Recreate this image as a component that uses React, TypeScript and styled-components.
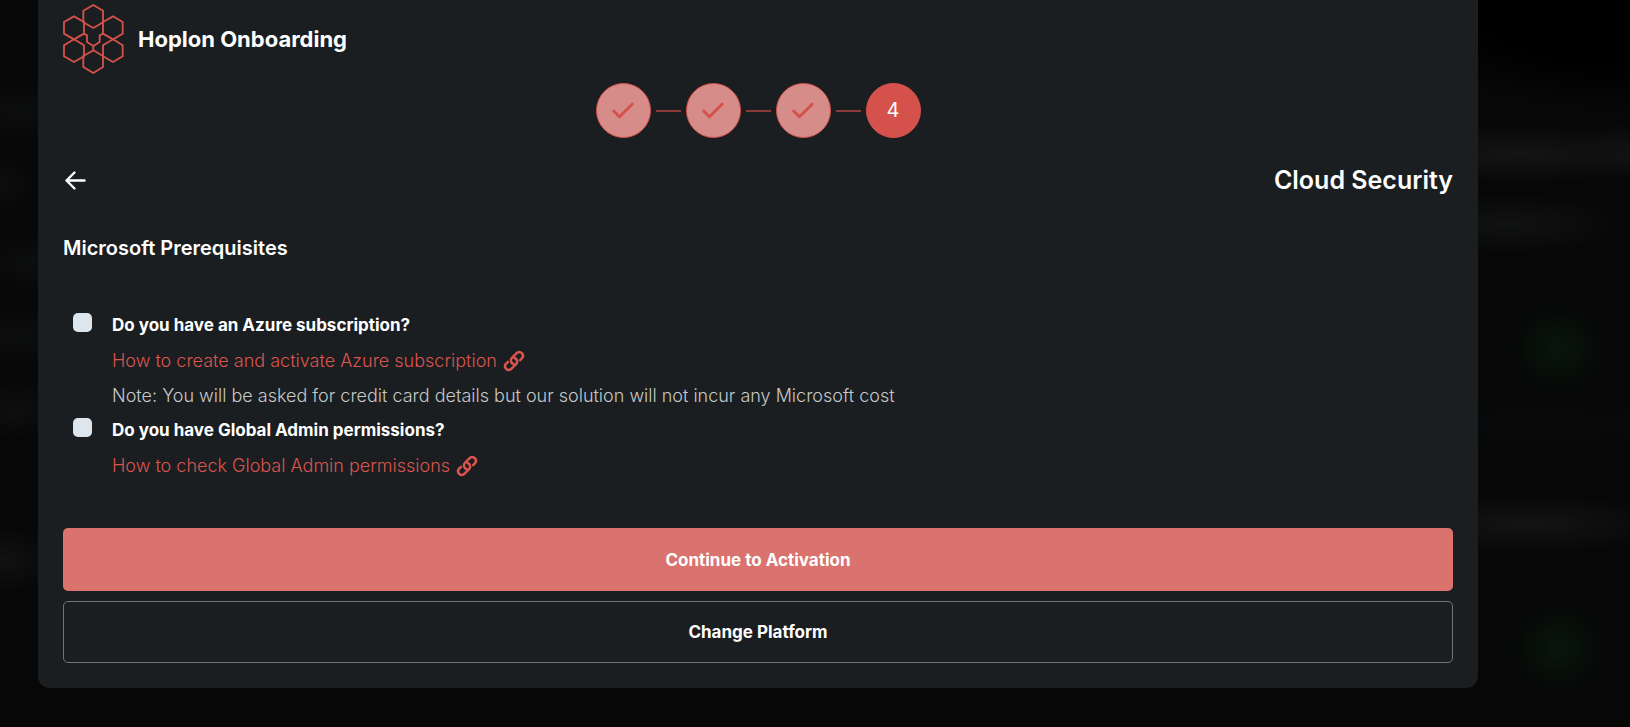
import React, { Fragment } from 'react';
import styled, { createGlobalStyle } from 'styled-components';
import { Check } from 'lucide-react';

const GlobalStyle = createGlobalStyle`
  *, *::before, *::after { box-sizing: border-box; }
  body {
    margin: 0;
    background: #050605;
    color: #fff;
    font-family: Inter, "Liberation Sans", sans-serif;
    font-size: 18px;
    line-height: 35px;
  }
  h1, h2, h3, p { margin: 0; }
`;

/* The dimmed page behind the dialog shows only as faint, out-of-focus smudges. */
const Page = styled.div`
  min-height: 100vh;
  padding: 0 152px 39px 38px;
  background:
    radial-gradient(52px 48px at calc(100% - 72px) 348px, #08160e, transparent),
    radial-gradient(52px 48px at calc(100% - 72px) 648px, #08160e, transparent),
    radial-gradient(150px 30px at calc(100% - 110px) 154px, #151515, transparent),
    radial-gradient(60px 30px at 100% 152px, #101111, transparent),
    radial-gradient(120px 30px at calc(100% - 120px) 224px, #111212, transparent),
    radial-gradient(150px 30px at calc(100% - 100px) 524px, #131413, transparent),
    radial-gradient(180px 30px at calc(100% - 90px) 425px, #0a0a0c, transparent),
    radial-gradient(60px 30px at 20px 110px, #0d0e0e, transparent),
    radial-gradient(40px 30px at 0 184px, #0d0e0e, transparent),
    radial-gradient(60px 30px at 30px 262px, #0d0e0e, transparent),
    radial-gradient(60px 30px at 20px 336px, #0d0e0e, transparent),
    radial-gradient(60px 30px at 15px 410px, #0e0f0f, transparent),
    radial-gradient(60px 34px at 5px 560px, #101111, transparent),
    radial-gradient(260px 110px at 100% 0, #000 60%, transparent),
    #060706;
`;

const Panel = styled.main`
  padding: 0 25px 25px;
  background: #1a1e20;
  border-radius: 0 0 12px 12px;
`;

const Brand = styled.header`
  display: flex;
  align-items: center;
  gap: 14px;
  height: 78px;
`;

const BrandName = styled.h1`
  font-size: 22px;
  font-weight: 700;
  line-height: 32px;
`;

const Stepper = styled.ol`
  display: flex;
  align-items: center;
  justify-content: center;
  gap: 5px;
  margin: 5px 0 0;
  padding: 0;
  list-style: none;
`;

const Step = styled.li<{ $done: boolean }>`
  display: grid;
  place-items: center;
  width: 55px;
  height: 55px;
  border: 1px solid #d5514b;
  border-radius: 50%;
  background: ${p => (p.$done ? '#d68c89' : '#d5514b')};
  color: ${p => (p.$done ? '#d5514b' : '#fff')};
  font-size: 20px;
`;

const Connector = styled.li`
  width: 25px;
  height: 2px;
  background: #8b3c38;
`;

const TitleRow = styled.div`
  display: flex;
  align-items: center;
  justify-content: space-between;
  margin-top: 24px;
`;

const BackButton = styled.button`
  display: flex;
  padding: 0;
  border: 0;
  background: none;
  color: #fff;
  cursor: pointer;
`;

const Title = styled.h2`
  font-size: 25px;
  font-weight: 600;
  line-height: 36px;
`;

const SectionTitle = styled.h3`
  margin-top: 32px;
  font-size: 20px;
  font-weight: 600;
  line-height: 36px;
`;

const Questions = styled.div`
  display: flex;
  flex-direction: column;
  padding: 42px 10px 45px;
`;

const Question = styled.div`
  display: flex;
  gap: 20px;
`;

const Answer = styled.div`
  display: flex;
  flex-direction: column;
  align-items: flex-start;
`;

const Tick = styled.input`
  appearance: none;
  flex: none;
  width: 19px;
  height: 19px;
  margin: 5px 0 0;
  border-radius: 5px;
  background: #dee6ed;
  &:checked { background: #d5514b; }
`;

const QuestionLabel = styled.label`
  font-size: 17px;
  font-weight: 700;
`;

const HelpLink = styled.a`
  display: flex;
  align-items: center;
  gap: 5px;
  color: #dc544e;
  font-weight: 300;
  text-decoration: none;
`;

const Note = styled.p`
  color: #c6c8c9;
  font-weight: 300;
`;

const Actions = styled.div`
  display: flex;
  flex-direction: column;
  gap: 10px;
`;

const ActionButton = styled.button<{ $primary?: boolean }>`
  height: ${p => (p.$primary ? 63 : 62)}px;
  border: ${p => (p.$primary ? '0' : '1px solid #717476')};
  border-radius: 5px;
  background: ${p => (p.$primary ? '#da726d' : 'transparent')};
  color: #fff;
  font: 700 17px/24px Inter, "Liberation Sans", sans-serif;
  cursor: pointer;
`;

const Logo = () => (
  <svg width="61" height="70" viewBox="0 0 183 210" fill="none" stroke="#d5514b" strokeWidth="5.5" aria-hidden="true">
    <path d="M91 3 120 20V55L91 72 61 55V20Z" />
    <path d="M33 37 63 54V89L33 106 3 89V54Z" />
    <path d="M150 37 179 54V89L150 106 120 89V54Z" />
    <path d="M33 106 63 124V157L33 174 3 157V124Z" />
    <path d="M150 106 179 124V157L150 174 120 157V124Z" />
    <path d="M91 139 120 156V189L91 207 61 189V156Z" />
    <path d="M63 89 72 94V114L91 126 110 114V94L120 89M91 126V139" />
  </svg>
);

const BackArrow = () => (
  <svg width="24" height="24" viewBox="0 0 24 24" fill="none" stroke="currentColor" strokeWidth="2.4" strokeLinecap="round" strokeLinejoin="round" aria-hidden="true">
    <path d="M21.5 12.5H3.5M11.5 4.5 3.5 12.5 11.5 20.5" />
  </svg>
);

const ChainIcon = () => (
  <svg width="24" height="24" viewBox="0 0 24 24" fill="none" stroke="currentColor" strokeWidth="2.5" strokeLinecap="round" strokeLinejoin="round" aria-hidden="true">
    <path d="M12.6 9A3.7 3.7 0 0 1 14.1 15.1L9.1 20.1A3.7 3.7 0 0 1 3.9 14.9L5.9 12.9" />
    <path d="M11.4 15A3.7 3.7 0 0 1 9.9 8.9L14.9 3.9A3.7 3.7 0 0 1 20.1 9.1L18.1 11.1" />
  </svg>
);

const steps = [1, 2, 3, 4];
const current = 4;

const questions = [
  {
    id: 'azure',
    label: 'Do you have an Azure subscription?',
    help: 'How to create and activate Azure subscription',
    note: 'Note: You will be asked for credit card details but our solution will not incur any Microsoft cost',
  },
  {
    id: 'admin',
    label: 'Do you have Global Admin permissions?',
    help: 'How to check Global Admin permissions',
  },
];

export default function App() {
  return (
    <Page>
      <GlobalStyle />
      <Panel>
        <Brand>
          <Logo />
          <BrandName>Hoplon Onboarding</BrandName>
        </Brand>
        <Stepper>
          {steps.map((n, i) => (
            <Fragment key={n}>
              {i > 0 && <Connector aria-hidden="true" />}
              <Step $done={n < current} aria-current={n === current ? 'step' : undefined}>
                {n < current ? <Check size={28} strokeWidth={2.5} /> : n}
              </Step>
            </Fragment>
          ))}
        </Stepper>
        <TitleRow>
          <BackButton type="button" aria-label="Back">
            <BackArrow />
          </BackButton>
          <Title>Cloud Security</Title>
        </TitleRow>
        <SectionTitle>Microsoft Prerequisites</SectionTitle>
        <Questions>
          {questions.map(q => (
            <Question key={q.id}>
              <Tick type="checkbox" id={q.id} />
              <Answer>
                <QuestionLabel htmlFor={q.id}>{q.label}</QuestionLabel>
                <HelpLink href="#">
                  {q.help}
                  <ChainIcon />
                </HelpLink>
                {q.note && <Note>{q.note}</Note>}
              </Answer>
            </Question>
          ))}
        </Questions>
        <Actions>
          <ActionButton type="button" $primary>Continue to Activation</ActionButton>
          <ActionButton type="button">Change Platform</ActionButton>
        </Actions>
      </Panel>
    </Page>
  );
}
